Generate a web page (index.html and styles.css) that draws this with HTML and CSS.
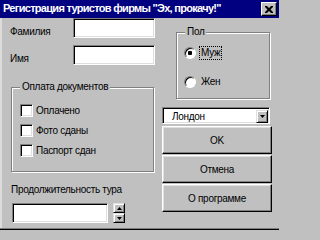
FILE: index.html
```html
<!DOCTYPE html>
<html lang="ru">
<head>
<meta charset="utf-8">
<title>Регистрация туристов</title>
<link rel="stylesheet" href="styles.css">
</head>
<body>
<div class="window">
  <div class="titlebar">
    <span class="title">Регистрация туристов фирмы "Эх, прокачу!"</span>
    <span class="close"><svg width="8" height="7" viewBox="0 0 8 7"><path d="M0 0h2l2 2 2-2h2v1l-2.5 2.5L8 6v1H6L4 5 2 7H0V6l2.5-2.5L0 1z" fill="#000"/></svg></span>
  </div>
  <div class="client">
    <div class="left">
      <div class="row row-first">
        <span class="lbl">Фамилия</span>
        <span class="field name-field"></span>
      </div>
      <div class="row row-second">
        <span class="lbl">Имя</span>
        <span class="field name-field"></span>
      </div>
      <div class="group docs">
        <span class="legend">Оплата документов</span>
        <div class="check"><span class="box"></span><span class="ctext">Оплачено</span></div>
        <div class="check"><span class="box"></span><span class="ctext">Фото сданы</span></div>
        <div class="check"><span class="box"></span><span class="ctext">Паспорт сдан</span></div>
      </div>
      <div class="dur-label">Продолжительность тура</div>
      <div class="dur-row">
        <span class="field dur-field"></span>
        <span class="spin">
          <span class="sbtn"><svg width="5" height="3" viewBox="0 0 5 3"><path d="M2.5 0L5 3H0z" fill="#000"/></svg></span>
          <span class="sbtn"><svg width="5" height="3" viewBox="0 0 5 3"><path d="M0 0h5L2.5 3z" fill="#000"/></svg></span>
        </span>
      </div>
    </div>
    <div class="right">
      <div class="group sex">
        <span class="legend">Пол</span>
        <div class="radio-row first"><span class="radio checked"></span><span class="rtext focus">Муж</span></div>
        <div class="radio-row"><span class="radio"></span><span class="rtext">Жен</span></div>
      </div>
      <div class="combo">
        <span class="ctext-combo">Лондон</span>
        <span class="drop"><svg width="5" height="3" viewBox="0 0 5 3"><path d="M0 0h5L2.5 3z" fill="#000"/></svg></span>
      </div>
      <div class="btn btn-ok">OK</div>
      <div class="btn">Отмена</div>
      <div class="btn">О программе</div>
    </div>
  </div>
</div>
</body>
</html>
```

FILE: styles.css
```css
* { box-sizing: border-box; }
html, body { margin: 0; padding: 0; }
body {
  width: 279px;
  height: 232px;
  background: #c0c0c0;
  font-family: "Liberation Sans", Arial, sans-serif;
  font-size: 10px;
  letter-spacing: -0.3px;
  line-height: 13px;
  color: #000;
  overflow: hidden;
}
.window {
  width: 279px;
  height: 230px;
  border-bottom: 1px solid #000;
  box-shadow: inset 0 -1px 0 #808080;
}
.titlebar {
  height: 18px;
  background: #000080;
  display: flex;
  align-items: center;
  padding: 0 2px 1px 3px;
}
.title {
  color: #fff;
  font-weight: bold;
  font-size: 11px;
  letter-spacing: -0.7px;
  flex: 1;
  white-space: nowrap;
}
.close {
  width: 16px;
  height: 14px;
  margin-top: 1px;
  background: #c0c0c0;
  border: 1px solid;
  border-color: #fff #000 #000 #fff;
  box-shadow: inset -1px -1px 0 #808080;
  display: flex;
  align-items: center;
  justify-content: center;
}
.client {
  display: flex;
  border-left: 2px solid #dcdcdc;
  height: 210px;
}
.left {
  width: 153px;
  padding-left: 8px;
  display: flex;
  flex-direction: column;
}
.row { display: flex; align-items: center; height: 20px; }
.row-second { margin-top: 7px; }
.lbl { width: 63px; padding-top: 6px; }
.field {
  display: block;
  background: #fff;
  border: 1px solid;
  border-color: #808080 #fff #fff #808080;
  box-shadow: inset 1px 1px 0 #000, inset -1px -1px 0 #dfdfdf;
}
.name-field { width: 82px; height: 20px; }
.group {
  position: relative;
  border: 1px solid #808080;
  box-shadow: inset 1px 1px 0 #fff, 1px 1px 0 #fff;
}
.legend {
  position: absolute;
  top: -8px;
  left: 8px;
  padding: 0 2px;
  background: #c0c0c0;
  line-height: 13px;
}
.docs {
  margin-top: 22px;
  margin-left: 1px;
  width: 143px;
  height: 85px;
  padding: 16px 0 0 8px;
}
.check { display: flex; align-items: center; height: 13px; margin-bottom: 7px; }
.box {
  width: 13px;
  height: 13px;
  background: #fff;
  border: 1px solid;
  border-color: #808080 #fff #fff #808080;
  box-shadow: inset 1px 1px 0 #000, inset -1px -1px 0 #dfdfdf;
  margin-right: 3px;
}
.dur-label { margin-top: 11px; margin-left: 1px; }
.dur-row { display: flex; margin-top: 7px; margin-left: 2px; }
.dur-field { width: 96px; height: 20px; }
.spin {
  margin-left: 5px;
  width: 12px;
  height: 20px;
  display: flex;
  flex-direction: column;
}
.sbtn {
  flex: 1;
  background: #c0c0c0;
  border: 1px solid;
  border-color: #dfdfdf #000 #000 #dfdfdf;
  box-shadow: inset 1px 1px 0 #fff, inset -1px -1px 0 #808080;
  display: flex;
  align-items: center;
  justify-content: center;
}
.right {
  margin-left: 7px;
  width: 110px;
  display: flex;
  flex-direction: column;
}
.sex {
  margin-top: 14px;
  margin-left: 14px;
  width: 94px;
  height: 67px;
  padding: 14px 0 0 7px;
}
.radio-row { display: flex; align-items: center; height: 12px; }
.radio-row + .radio-row { margin-top: 17px; }
.radio {
  width: 12px;
  height: 12px;
  border-radius: 50%;
  border: 1px solid;
  border-color: #808080 #fff #fff #808080;
  box-shadow: inset 1px 1px 0 #000;
  background: #fff;
  margin-right: 3px;
}
.radio.checked { background: radial-gradient(circle, #000 0 2px, #fff 2.5px); }
.rtext { padding: 0 1px; line-height: 12px; border: 1px solid transparent; }
.rtext.focus { border: 1px dotted #000; }
.combo {
  margin-top: 8px;
  width: 108px;
  height: 17px;
  background: #fff;
  border: 1px solid;
  border-color: #808080 #fff #fff #808080;
  box-shadow: inset 1px 1px 0 #000, inset -1px -1px 0 #dfdfdf;
  display: flex;
  align-items: center;
  padding: 2px 1px 1px 9px;
}
.ctext-combo { flex: 1; }
.drop {
  width: 12px;
  height: 13px;
  background: #c0c0c0;
  border: 1px solid;
  border-color: #dfdfdf #000 #000 #dfdfdf;
  box-shadow: inset 1px 1px 0 #fff, inset -1px -1px 0 #808080;
  display: flex;
  align-items: center;
  justify-content: center;
}
.btn {
  height: 28px;
  margin-top: 1px;
  display: flex;
  align-items: center;
  justify-content: center;
  border: 1px solid;
  border-color: #fff #000 #000 #fff;
  box-shadow: inset -1px -1px 0 #808080, inset 1px 1px 0 #dfdfdf;
}
.btn-ok { margin-top: 2px; }
```
